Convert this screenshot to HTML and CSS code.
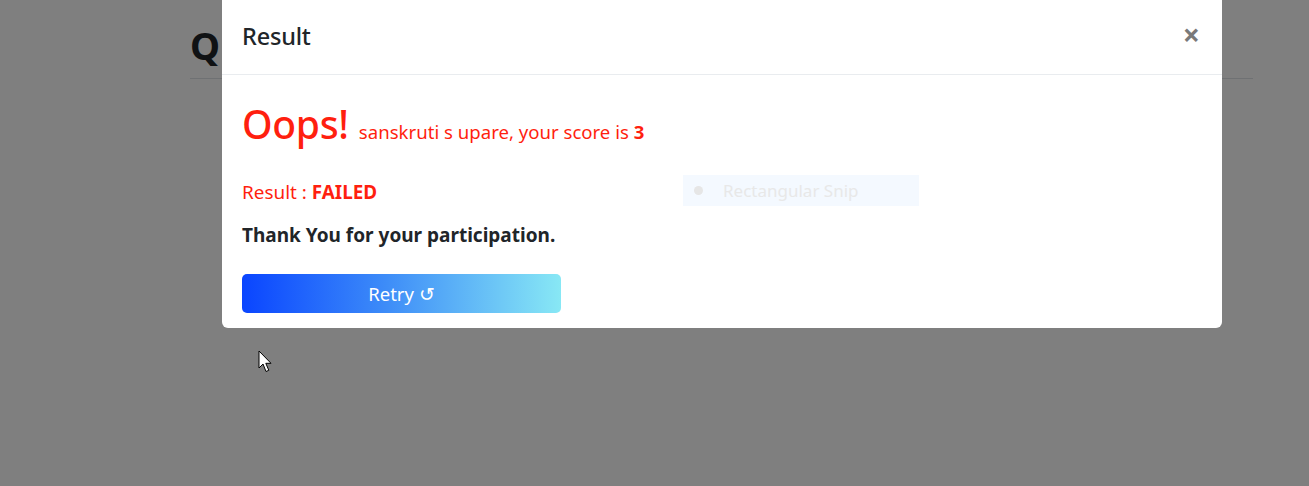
FILE: index.html
```html
<!DOCTYPE html>
<html>
<head>
<meta charset="utf-8">
<link rel="stylesheet" href="styles.css">
</head>
<body>
<div class="page">
  <h1 class="page-title">Q</h1>
  <div class="page-rule"></div>
</div>
<div class="backdrop"></div>
<div class="modal">
  <div class="modal-header">
    <h2 class="modal-title">Result</h2>
    <span class="close">&times;</span>
  </div>
  <div class="modal-body">
    <div class="headline"><span class="oops">Oops!</span> <span class="score">sanskruti s upare, your score is <b>3</b></span></div>
    <p class="result">Result : <b>FAILED</b></p>
    <p class="thanks">Thank You for your participation.</p>
    <button class="retry">Retry &#8634;</button>
  </div>
  <div class="snip"><span class="snip-dot"></span><span class="snip-label">Rectangular Snip</span></div>
</div>
<svg class="cursor" width="15" height="24" viewBox="0 0 15 24">
  <path d="M1 1 L1 18 L5 14 L8 21.5 L10.8 20.3 L7.8 13.3 L13 13.3 Z" fill="#fff" stroke="#000" stroke-width="1"/>
</svg>
</body>
</html>
```
FILE: styles.css
```css
html, body {
  margin: 0;
  padding: 0;
}
body {
  width: 1309px;
  height: 486px;
  overflow: hidden;
  background: #fff;
  font-family: "Noto Sans", "Open Sans", sans-serif;
  position: relative;
}
.page {
  padding: 22px 56px 0 190px;
}
.page-title {
  margin: 0;
  font-size: 38px;
  font-weight: 700;
  line-height: 46px;
  color: #212529;
}
.page-rule {
  margin-top: 10px;
  height: 1px;
  background: #dee2e6;
}
.backdrop {
  position: absolute;
  inset: 0;
  background: rgba(0, 0, 0, 0.5);
}
.modal {
  position: absolute;
  left: 222px;
  top: 0;
  width: 1000px;
  background: #fff;
  border-radius: 0 0 6px 6px;
}
.modal-header {
  height: 75px;
  box-sizing: border-box;
  border-bottom: 1px solid #e9ecef;
  display: flex;
  align-items: center;
  justify-content: space-between;
  padding: 0 20px 2px 20px;
}
.modal-title {
  margin: 0;
  font-size: 23.5px;
  font-weight: 500;
  color: #212529;
  letter-spacing: -0.2px;
}
.close {
  font-size: 30px;
  font-weight: 700;
  color: #7a7a7a;
  line-height: 1;
  margin-right: 2px;
  margin-bottom: 2px;
}
.modal-body {
  padding: 21px 20px 15px 20px;
}
.headline {
  color: #ff1f0f;
  line-height: 56px;
}
.oops {
  font-size: 39px;
  font-weight: 500;
  letter-spacing: -0.3px;
}
.score {
  font-size: 18.6px;
  margin-left: 6px;
}
.score b {
  font-weight: 700;
}
.result {
  margin: 18px 0 0 0;
  font-size: 18.9px;
  line-height: 26px;
  color: #ff1f0f;
}
.result b {
  font-weight: 700;
}
.thanks {
  margin: 17px 0 0 0;
  font-size: 19px;
  font-weight: 700;
  line-height: 26px;
  color: #212529;
}
.retry {
  margin-top: 26px;
  width: 319px;
  height: 39px;
  border: none;
  border-radius: 5px;
  background: linear-gradient(90deg, #0a45ff 0%, #3d8cf8 45%, #88e8f5 100%);
  color: #fff;
  font-family: inherit;
  font-size: 18.5px;
  display: flex;
  align-items: center;
  justify-content: center;
  padding: 0;
}
.snip {
  position: absolute;
  left: 461px;
  top: 175px;
  width: 236px;
  height: 31px;
  background: #f4f9ff;
  display: flex;
  align-items: center;
  gap: 20px;
  padding-left: 11px;
  box-sizing: border-box;
}
.snip-dot {
  width: 9px;
  height: 9px;
  border-radius: 50%;
  background: #e6e6e6;
}
.snip-label {
  font-size: 17px;
  color: #e8e8e8;
}
.cursor {
  position: absolute;
  left: 258px;
  top: 350px;
}
```
